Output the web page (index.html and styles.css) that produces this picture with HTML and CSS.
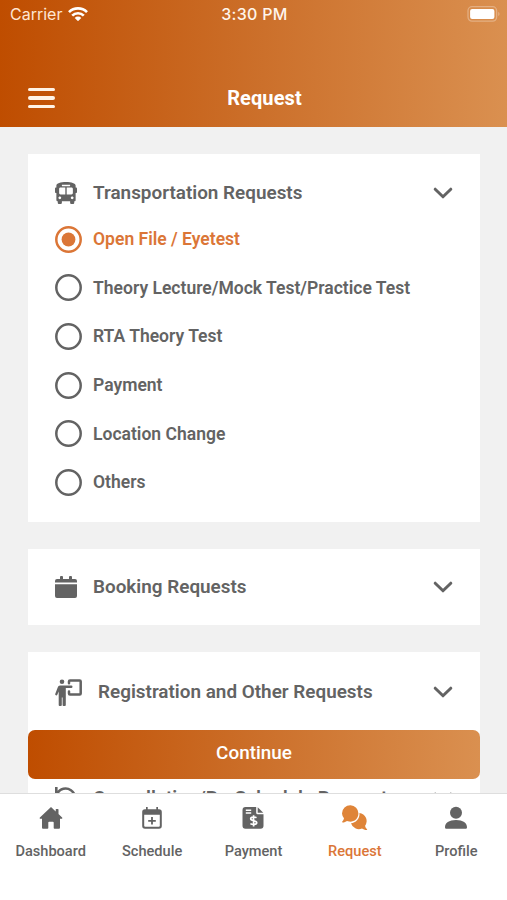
FILE: index.html
```html
<!DOCTYPE html>
<html lang="en">
<head>
<meta charset="utf-8">
<title>Request</title>
<link rel="stylesheet" href="styles.css">
</head>
<body>
<svg class="sprite" aria-hidden="true">
  <symbol id="chevron" viewBox="0 0 20 12"><path d="M2.2 2.2 10 9.8l7.8-7.6" fill="none" stroke="currentColor" stroke-width="3" stroke-linecap="round" stroke-linejoin="round"/></symbol>
  <symbol id="radio" viewBox="0 0 27 27"><circle cx="13.5" cy="13.5" r="12.2" fill="none" stroke="currentColor" stroke-width="2.5"/></symbol>
</svg>
<div class="app">
  <header class="header">
    <div class="status">
      <div class="carrier"><span>Carrier</span>
        <svg class="wifi" viewBox="0 0 20 14"><g fill="none" stroke="currentColor" stroke-width="2.7"><path d="M1 5.100a12.900 12.900 0 0 1 18 0"/><path d="M4.200 8.600a8.300 8.300 0 0 1 11.600 0"/></g><path d="M10 14.200 6.700 10.900a4.700 4.700 0 0 1 6.600 0z" fill="currentColor"/></svg>
      </div>
      <div class="time">3:30 PM</div>
      <svg class="battery" viewBox="0 0 34 16"><rect x="1" y=".7" width="28.6" height="14.4" rx="4" fill="none" stroke="currentColor" stroke-opacity=".3" stroke-width="1.3"/><rect x="3.1" y="2.9" width="24.3" height="10" rx="2" fill="currentColor"/><path d="M31.3 5.700c1.600.8 1.600 3.600 0 4.400z" fill="currentColor" fill-opacity=".35"/></svg>
    </div>
    <div class="nav">
      <div class="menu"><i></i><i></i><i></i></div>
      <h1>Request</h1>
    </div>
  </header>

  <main class="content">
    <section class="card">
      <div class="card-head first">
        <svg class="icon" viewBox="0 0 512 512"><path fill="currentColor" fill-rule="evenodd" d="M488 128h-8V80c0-44.800-99.200-80-224-80S32 35.200 32 80v48h-8c-13.250 0-24 10.740-24 24v80c0 13.250 10.750 24 24 24h8v160c0 17.670 14.330 32 32 32v32c0 17.670 14.330 32 32 32h32c17.670 0 32-14.330 32-32v-32h192v32c0 17.670 14.330 32 32 32h32c17.670 0 32-14.330 32-32v-32h6.400c16 0 25.600-12.800 25.600-25.600V256h8c13.250 0 24-10.750 24-24v-80c0-13.260-10.750-24-24-24zM160 72c0-4.420 3.580-8 8-8h176c4.420 0 8 3.580 8 8v16c0 4.420-3.580 8-8 8H168c-4.420 0-8-3.580-8-8V72zm-48 328c-17.670 0-32-14.330-32-32s14.330-32 32-32 32 14.330 32 32-14.330 32-32 32zm128-112H128c-17.670 0-32-14.330-32-32v-96c0-17.670 14.330-32 32-32h112v160zm32 0V128h112c17.670 0 32 14.330 32 32v96c0 17.670-14.330 32-32 32H272zm128 112c-17.670 0-32-14.330-32-32s14.330-32 32-32 32 14.330 32 32-14.330 32-32 32z"/></svg>
        <h2>Transportation Requests</h2>
        <svg class="chevron"><use href="#chevron"/></svg>
      </div>
      <ul class="options">
        <li class="selected"><svg class="radio" viewBox="0 0 27 27"><use href="#radio"/><circle cx="13.5" cy="13.5" r="6.900" fill="currentColor"/></svg>Open File / Eyetest</li>
        <li><svg class="radio"><use href="#radio"/></svg>Theory Lecture/Mock Test/Practice Test</li>
        <li><svg class="radio"><use href="#radio"/></svg>RTA Theory Test</li>
        <li><svg class="radio"><use href="#radio"/></svg>Payment</li>
        <li><svg class="radio"><use href="#radio"/></svg>Location Change</li>
        <li><svg class="radio"><use href="#radio"/></svg>Others</li>
      </ul>
    </section>

    <section class="card">
      <div class="card-head">
        <svg class="icon" viewBox="0 0 22 22"><path fill="currentColor" d="M2 3h3V1a1 1 0 0 1 1-1h1a1 1 0 0 1 1 1v2h6V1a1 1 0 0 1 1-1h1a1 1 0 0 1 1 1v2h3a2 2 0 0 1 2 2v1.600H0V5a2 2 0 0 1 2-2zM0 8.200h22V20a2 2 0 0 1-2 2H2a2 2 0 0 1-2-2z"/></svg>
        <h2>Booking Requests</h2>
        <svg class="chevron"><use href="#chevron"/></svg>
      </div>
    </section>

    <section class="card">
      <div class="card-head tall">
        <svg class="icon wide" viewBox="0 0 27 27"><circle cx="7" cy="2.700" r="2.300" fill="currentColor"/><path fill="currentColor" d="M5 6.600h11.300a1.100 1.100 0 0 1 0 2.400H10.800v17.100a.9.900 0 0 1-.9.900H8.500a.9.900 0 0 1-.9-.9v-7.600h-.8v7.600a.9.900 0 0 1-.9.900H4.600a.9.900 0 0 1-.9-.9V12.500l-1.400 3.300a1.150 1.150 0 0 1-2.100-.9l2.500-6.500A2.600 2.600 0 0 1 5 6.600z"/><path fill="none" stroke="currentColor" stroke-width="2.500" stroke-linejoin="round" stroke-linecap="round" d="M14 4.200V2.400a1 1 0 0 1 1-1h9.700a1 1 0 0 1 1 1v12.200a1 1 0 0 1-1 1H15a1 1 0 0 1-1-1V12.500"/></svg>
        <h2>Registration and Other Requests</h2>
        <svg class="chevron"><use href="#chevron"/></svg>
      </div>
    </section>

    <section class="card">
      <div class="card-head">
        <svg class="icon" viewBox="0 0 22 22"><path fill="none" stroke="currentColor" stroke-width="2.600" d="M1.300 0v7.200h7M2.200 6.500a9.500 9.500 0 1 1 1.500 11.200"/></svg>
        <h2>Cancellation/Re-Schedule Request</h2>
        <svg class="chevron"><use href="#chevron"/></svg>
      </div>
    </section>

    <button class="continue">Continue</button>
  </main>

  <nav class="tabs">
    <a class="tab"><svg viewBox="0 0 24 24"><path fill="currentColor" d="M12 1 .900 11.500c-.6.600-.2 1.300.6 1.300H3v8.700c0 .8.500 1.300 1.300 1.300h4.200c.5 0 .8-.3.800-.8v-5.500c0-.5.300-.8.800-.8h3.800c.5 0 .8.300.8.800V22c0 .5.300.8.800.8h4.200c.8 0 1.300-.5 1.300-1.300v-8.700h1.500c.8 0 1.200-.7.600-1.300L19.500 8V3.500c0-.4-.2-.6-.6-.6h-1.600c-.4 0-.6.200-.6.600v1.900z"/></svg><span>Dashboard</span></a>
    <a class="tab"><svg viewBox="0 0 24 24"><path fill="currentColor" fill-rule="evenodd" d="M6 1h1.700v2.300h8.600V1H18v2.300h1a2.800 2.800 0 0 1 2.800 2.800V20a2.800 2.800 0 0 1-2.800 2.800H5A2.800 2.800 0 0 1 2.200 20V6.100A2.800 2.800 0 0 1 5 3.300h1zM4.200 8.700V19.800a1 1 0 0 0 1 1h13.600a1 1 0 0 0 1-1V8.700zM11.100 11h1.800v2.900h2.900v1.800h-2.900v2.900h-1.800v-2.900H8.200v-1.800h2.900z"/></svg><span>Schedule</span></a>
    <a class="tab"><svg viewBox="0 0 24 24"><path fill="currentColor" fill-rule="evenodd" d="M4.500 1h10.700v5.700a1.600 1.600 0 0 0 1.600 1.600h5.700v11.500a3 3 0 0 1-3 3h-15a3 3 0 0 1-3-3V4a3 3 0 0 1 3-3zm.3 2.500V5h5.400V3.500zm0 2.800v1.500h5.400V6.300z"/><path fill="currentColor" d="M16.700 1.200 22.300 6.800h-5.600z"/><path fill="none" stroke="#fff" stroke-width="1.700" d="M15.500 11.700c-1.600-1-5.800-1.100-5.800 1.100 0 2.500 6 1.400 6 3.900 0 2.200-4.300 2.200-6.300.9M12.600 9.200v11.200"/></svg><span>Payment</span></a>
    <a class="tab active"><svg class="chat" viewBox="0 0 26 26"><path d="M17.400 7.900a8.100 8.100 0 0 1 5.700 12.800c.2 1.400.9 2.500 1.900 3.400.4.400.1.900-.4.900-1.800 0-3.400-.6-4.600-1.500A8.200 8.200 0 0 1 9 18.200c5.200-.7 9.100-5 8.400-10.300z"/><path d="M8.500.2a8.100 8.100 0 0 1 7.900 8.200c0 5-4.300 8.700-9.200 8.200-.8-.1-1.500-.3-2.200-.6-1.200.9-2.700 1.500-4.300 1.500-.6 0-.8-.5-.4-.9.900-.9 1.500-2 1.700-3.300A8.600 8.600 0 0 1 0 8.400 8.300 8.300 0 0 1 8.500.2z"/></svg><span>Request</span></a>
    <a class="tab"><svg viewBox="0 0 24 24"><circle cx="12" cy="6.700" r="6" fill="currentColor"/><path fill="currentColor" d="M1 21.200c0-4.300 4-7.200 11-7.200s11 2.900 11 7.200c0 1-.7 1.600-1.600 1.600H2.600c-.9 0-1.600-.6-1.600-1.600z"/></svg><span>Profile</span></a>
  </nav>
</div>
</body>
</html>
```
FILE: styles.css
```css
* { box-sizing: border-box; }
body { margin: 0; font-family: Roboto, "Liberation Sans", sans-serif; color: #636363; }
h1, h2, ul { margin: 0; padding: 0; }
.sprite { position: absolute; width: 0; height: 0; }
.app { width: 507px; height: 900px; display: flex; flex-direction: column; background: #fff; overflow: hidden; }

.header { flex: none; height: 127px; color: #fff; background: linear-gradient(91deg, #bf4d00, #cc702b 52%, #da9050); }
.status { display: grid; grid-template-columns: 1fr auto 1fr; align-items: center; height: 28px; padding: 0 6px 0 10px; font: 500 16px/20px Inter, sans-serif; }
.carrier { display: flex; align-items: center; gap: 6px; font-weight: 400; color: #ffe6d2; }
.wifi { width: 20px; height: 14px; color: #fff; }
.time { color: #fff5ec; letter-spacing: .3px; margin-right: 2px; }
.battery { width: 34px; height: 16px; justify-self: end; }
.nav { display: grid; grid-template-columns: 27px 1fr; align-items: center; padding: 0 33px 0 28px; margin-top: 56px; height: 28px; }
.menu { display: grid; gap: 5px; }
.menu i { height: 3.500px; border-radius: 2px; background: #fff3e6; }
h1 { text-align: center; font-size: 20px; font-weight: 700; line-height: 28px; letter-spacing: .1px; }

.content { flex: none; position: relative; height: 666px; padding: 27px 27px 0 28px; display: flex; flex-direction: column; gap: 27px; background: #f1f1f1; overflow: hidden; }
.card { flex: none; background: #fff; padding: 0 27px; }
.card-head { display: flex; align-items: center; height: 76px; }
.card-head.first { height: 77px; }
.card-head.tall { height: 81px; }
.icon { flex: none; width: 22px; height: 22px; margin-right: 16px; }
.icon.wide { width: 27px; height: 27px; }
h2 { flex: 1; font-size: 18.900px; font-weight: 600; line-height: 24px; white-space: nowrap; }
.chevron { flex: none; width: 20px; height: 12px; }
.options { list-style: none; padding-bottom: 15px; margin-top: -16px; }
.options li { display: flex; align-items: center; gap: 11px; height: 48.600px; font-size: 17.550px; font-weight: 600; }
.radio { flex: none; width: 27px; height: 27px; }
.selected { color: #db7637; }
.continue { position: absolute; left: 28px; right: 27px; bottom: 14px; height: 49px; padding: 0 0 4px; border: 0; border-radius: 7px; color: #fff; font: 500 18.900px/24px Roboto, sans-serif; background: linear-gradient(92deg, #bf4d00, #cc702b 52%, #da9050); }

.tabs { flex: 1; display: grid; grid-template-columns: repeat(5, 1fr); border-top: 1px solid #dedede; background: #fff; }
.tab { display: flex; flex-direction: column; align-items: center; padding-top: 12px; font-size: 14.600px; font-weight: 500; line-height: 20px; }
.tab svg { width: 24px; height: 24px; margin-bottom: 11px; }
.tab .chat { width: 26px; height: 26px; margin: -1px 0 10px 1px; fill: #df8438; }
.active { color: #db7637; }
```
